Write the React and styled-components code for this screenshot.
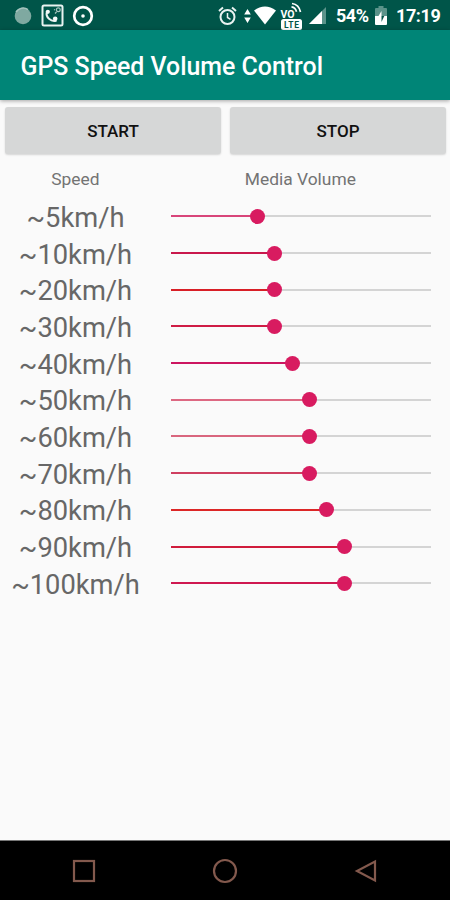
import styled, { createGlobalStyle } from "styled-components";

const rows = [
  { speed: "~5km/h", volume: 5, color: "#d8457a" },
  { speed: "~10km/h", volume: 6, color: "#c9184c" },
  { speed: "~20km/h", volume: 6, color: "#d81f26" },
  { speed: "~30km/h", volume: 6, color: "#cf1c45" },
  { speed: "~40km/h", volume: 7, color: "#cc1560" },
  { speed: "~50km/h", volume: 8, color: "#dd6882" },
  { speed: "~60km/h", volume: 8, color: "#d9667e" },
  { speed: "~70km/h", volume: 8, color: "#cf3f60" },
  { speed: "~80km/h", volume: 9, color: "#dc2626" },
  { speed: "~90km/h", volume: 10, color: "#d01c3c" },
  { speed: "~100km/h", volume: 10, color: "#cf1850" },
];

const MAX_VOLUME = 15;

const App = () => {
  return (
    <Container>
      <GlobalStyle />
      <StatusBar>
        <StatusLeft>
          <svg width="18" height="18" viewBox="0 0 18 18">
            <circle cx="9" cy="9" r="8.3" fill="#7fa9a1" />
            <path d="M2 5a8.3 8.3 0 0 1 12-2.4" stroke="#a5c4be" strokeWidth="1.5" fill="none" />
          </svg>
          <svg width="23" height="23" viewBox="0 0 23 23" fill="none" stroke="#e9f3f1">
            <rect x="1.5" y="1.5" width="20" height="20" rx="1.5" strokeWidth="2" />
            <path
              d="M6 7.500c-1 3 0 5.500 2 7.300s4.800 2.700 7.500 1.700"
              strokeWidth="2"
            />
            <circle cx="6.800" cy="7.800" r="2.100" fill="#f4f9f8" stroke="none" />
            <circle cx="14.200" cy="14.800" r="2.300" fill="#f4f9f8" stroke="none" />
            <circle cx="17.300" cy="5.800" r="1.900" stroke="#a5c4be" strokeWidth="1.200" />
            <path d="M13 5.500l1 .5M14 9.500l1.500-1.500" stroke="#a5c4be" strokeWidth="1.300" />
          </svg>
          <svg width="22" height="22" viewBox="0 0 22 22" fill="none">
            <circle cx="11" cy="11" r="8.800" stroke="#fff" strokeWidth="2.700" />
            <circle cx="11" cy="11" r="1.800" fill="#fff" />
          </svg>
        </StatusLeft>
        <StatusRight>
          <AlarmIcon width="19" height="20" viewBox="0 0 19 20" fill="none" stroke="#e9f3f1">
            <circle cx="9.500" cy="11" r="7" strokeWidth="2" />
            <path d="M1 5l4-3.400M18 5l-4-3.400" strokeWidth="2" />
            <path d="M9.500 7v4.500l3 1.800" strokeWidth="1.500" />
          </AlarmIcon>
          <ArrowsIcon width="7" height="16" viewBox="0 0 7 16" fill="#fff">
            <path d="M3.500 1L6.800 6.500H.2zM3.500 15L6.800 9.500H.2z" />
          </ArrowsIcon>
          <WifiIcon width="22" height="19" viewBox="0 0 22 19" fill="#fff">
            <path d="M0 4.500Q11-3.500 22 4.500L11 18.500z" />
          </WifiIcon>
          <VolteIcon width="24" height="28" viewBox="0 0 24 28">
            <text x="0.500" y="15.500" fontSize="10.500" fontWeight="700" fill="#fff">
              VO
            </text>
            <path
              d="M11.500 4.800q4 .5 5 5M12 1.500q7 1 8.500 8.500"
              fill="none"
              stroke="#fff"
              strokeWidth="1.700"
            />
            <rect x="1" y="17" width="21" height="11" rx="2.500" fill="#fff" />
            <text x="4" y="25.500" fontSize="8.500" fontWeight="700" fill="#045549" textLength="15">
              LTE
            </text>
          </VolteIcon>
          <SignalIcon width="17" height="17" viewBox="0 0 17 17">
            <path d="M17 0v17H0z" fill="#5b938a" />
            <path d="M13 4v13H0z" fill="#fff" />
          </SignalIcon>
          <Percent>54%</Percent>
          <BatteryIcon width="12" height="19" viewBox="0 0 12 19">
            <path d="M3.500 0h5v2H11q1 0 1 1v7H0V3q0-1 1-1h2.500z" fill="#5b938a" />
            <path d="M0 10h12v8q0 1-1 1H1q-1 0-1-1z" fill="#fff" />
            <path d="M6.500 10v6l2.800-6z" fill="#045549" />
            <path d="M6.500 5v5H3.500z" fill="#fff" />
          </BatteryIcon>
          <Clock>17:19</Clock>
        </StatusRight>
      </StatusBar>
      <Header>GPS Speed Volume Control</Header>
      <Main>
        <ButtonWrapper>
          <Button>START</Button>
          <Button>STOP</Button>
        </ButtonWrapper>
        <TitleRow>
          <SpeedTitle>Speed</SpeedTitle>
          <VolumeTitle>Media Volume</VolumeTitle>
        </TitleRow>
        <Rows>
          {rows.map((row) => (
            <Row key={row.speed}>
              <Speed>{row.speed}</Speed>
              <Slider>
                <Filled $color={row.color} style={{ width: `${(row.volume / MAX_VOLUME) * 100}%` }} />
                <Thumb />
                <Rest />
              </Slider>
            </Row>
          ))}
        </Rows>
      </Main>
      <NavBar>
        <svg width="24" height="24" viewBox="0 0 24 24">
          <rect x="2" y="2" width="20" height="20" />
        </svg>
        <svg width="26" height="26" viewBox="0 0 26 26">
          <circle cx="13" cy="13" r="11" />
        </svg>
        <svg width="24" height="24" viewBox="0 0 24 24">
          <path d="M21 2.500v19L3 12z" />
        </svg>
      </NavBar>
    </Container>
  );
};

const GlobalStyle = createGlobalStyle`
  * {
    box-sizing: border-box;
  }
  body {
    margin: 0;
    font-family: Roboto, "Liberation Sans", sans-serif;
  }
`;

const Container = styled.div`
  display: flex;
  flex-direction: column;
  width: 450px;
  height: 900px;
  overflow: hidden;
  background-color: #fafafa;
`;

const StatusBar = styled.div`
  display: flex;
  justify-content: space-between;
  flex-shrink: 0;
  height: 30px;
  padding: 1px 9px 0 14px;
  background-color: #005549;
`;

const StatusLeft = styled.div`
  display: flex;
  align-items: center;
  gap: 8.5px;
`;

const StatusRight = styled.div`
  display: flex;
  align-items: center;
  color: #fff;
  font-size: 18px;
  font-weight: 700;
`;

const AlarmIcon = styled.svg`
  margin-right: 7px;
`;

const ArrowsIcon = styled.svg`
  margin-right: 3px;
`;

const WifiIcon = styled.svg`
  margin-right: 4px;
`;

const VolteIcon = styled.svg`
  margin-right: 5px;
`;

const SignalIcon = styled.svg`
  margin-right: 10px;
`;

const Percent = styled.span`
  width: 33px;
  margin-right: 6px;
  letter-spacing: -0.5px;
`;

const BatteryIcon = styled.svg`
  margin-right: 9px;
`;

const Clock = styled.span`
  width: 45px;
  letter-spacing: -0.4px;
`;

const Header = styled.div`
  display: flex;
  align-items: center;
  flex-shrink: 0;
  height: 70px;
  padding: 3px 20.5px 0;
  background-color: #008577;
  box-shadow: 0 1px 4px rgba(0, 0, 0, 0.35);
  color: #fff;
  font-size: 24.9px;
  font-weight: 500;
`;

const Main = styled.div`
  flex: 1;
  padding-top: 7px;
`;

const ButtonWrapper = styled.div`
  display: flex;
  gap: 9px;
  padding: 0 4px 0 5px;
`;

const Button = styled.button`
  flex: 1;
  height: 47px;
  padding: 1px 0 0;
  border: none;
  border-radius: 3px;
  background-color: #d6d7d7;
  box-shadow: 0 1px 2px rgba(0, 0, 0, 0.15);
  color: #111;
  font-family: inherit;
  font-size: 17px;
  font-weight: 500;
`;

const TitleRow = styled.div`
  display: flex;
  height: 43px;
  padding-top: 15px;
  color: #737373;
  font-size: 17.4px;
  line-height: 20px;
  text-align: center;
`;

const SpeedTitle = styled.div`
  width: 151px;
`;

const VolumeTitle = styled.div`
  width: 300px;
`;

const Rows = styled.div`
  display: flex;
  flex-direction: column;
`;

const Row = styled.div`
  display: flex;
  align-items: center;
  height: 36.7px;
`;

const Speed = styled.div`
  width: 151px;
  padding-top: 5px;
  color: #676767;
  font-size: 27.3px;
  line-height: 34px;
  text-align: center;
`;

const Slider = styled.div`
  display: flex;
  align-items: center;
  width: 260px;
  padding-top: 2px;
  margin-left: 19.7px;
`;

const Filled = styled.div`
  flex-shrink: 0;
  height: 2px;
  background-color: ${({ $color }) => $color};
`;

const Thumb = styled.div`
  z-index: 1;
  flex-shrink: 0;
  width: 15px;
  height: 15px;
  margin: 0 -7.5px;
  border-radius: 50%;
  background-color: #d81b60;
`;

const Rest = styled.div`
  flex: 1;
  height: 2px;
  background-color: #d4d4d4;
`;

const NavBar = styled.div`
  display: flex;
  align-items: center;
  justify-content: space-between;
  flex-shrink: 0;
  height: 60px;
  padding: 0 72px;
  border-top: 1px solid #777;
  background-color: #000;
  svg {
    fill: none;
    stroke: #83594d;
    stroke-width: 2.2;
  }
`;

export default App;
